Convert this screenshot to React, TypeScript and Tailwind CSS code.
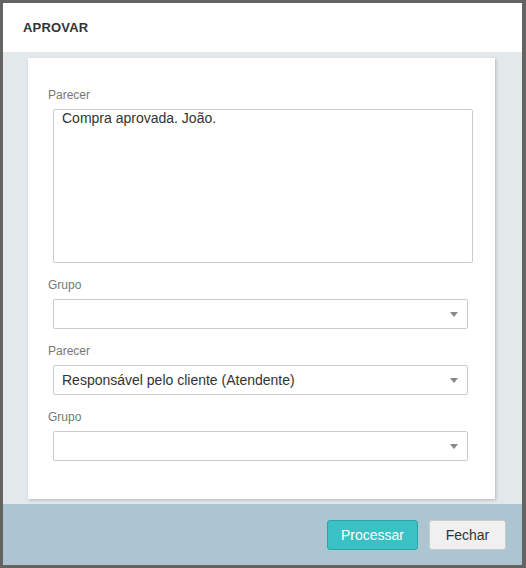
export default function App() {
  const font = { fontFamily: '"Liberation Sans", Arial, sans-serif' };
  return (
    <div className="h-[568px] w-[526px] bg-[#636363] pl-[3px] pt-[3px]" style={font}>
      <div className="flex h-[562px] w-[519px] flex-col bg-white">
        {/* header */}
        <div className="flex h-[49px] shrink-0 items-center px-5 pt-[1px]">
          <h1 className="text-[13px] font-bold tracking-[0.2px] text-[#333]">APROVAR</h1>
        </div>

        {/* body */}
        <div className="flex-1 bg-[#e3e8eb] pl-[25px] pr-[27px] pt-[6px] pb-[5px]">
          <div className="h-[441px] bg-white pt-[29px] pl-5 pr-[22px] shadow-[1px_1px_3px_rgba(0,0,0,0.22)]">
            <div className="mb-[1px]">
              <Label>Parecer</Label>
            </div>
            <div className="ml-[5px] h-[154px] w-[420px] rounded-[2px] border border-[#ccc] px-2 pt-0 text-[14px] leading-4 text-[#333]">
              Compra aprovada. João.
            </div>

            <div className="mt-[14px]">
              <Label>Grupo</Label>
              <Select value="" />
            </div>
            <div className="mt-[14px]">
              <Label>Parecer</Label>
              <Select value="Responsável pelo cliente (Atendente)" />
            </div>
            <div className="mt-[14px]">
              <Label>Grupo</Label>
              <Select value="" />
            </div>
          </div>
        </div>

        {/* footer */}
        <div className="flex h-[61px] shrink-0 items-start justify-end gap-[11px] bg-[#adc4d1] pr-[16px] pt-[16px]">
          <button className="h-[30px] w-[91px] rounded-[3px] border border-[#2aa4a8] bg-[#3bc0c3] text-[14px] text-white">
            Processar
          </button>
          <button className="h-[30px] w-[77px] rounded-[3px] border border-[#ccc] bg-[#f0f0f0] text-[14px] text-[#333]">
            Fechar
          </button>
        </div>
      </div>
    </div>
  );
}

function Label({ children }: { children: React.ReactNode }) {
  return <div className="mb-[6px] h-4 text-[12px] leading-4 text-[#777]">{children}</div>;
}

function Select({ value }: { value: string }) {
  return (
    <div className="ml-[5px] flex h-[30px] w-[415px] items-center justify-between rounded-[2px] border border-[#ccc] pl-2 pr-[9px] text-[14px] text-[#333]">
      <span>{value}</span>
      <svg width="8" height="5" viewBox="0 0 8 5">
        <path d="M0 0h8L4 5z" fill="#888" />
      </svg>
    </div>
  );
}
